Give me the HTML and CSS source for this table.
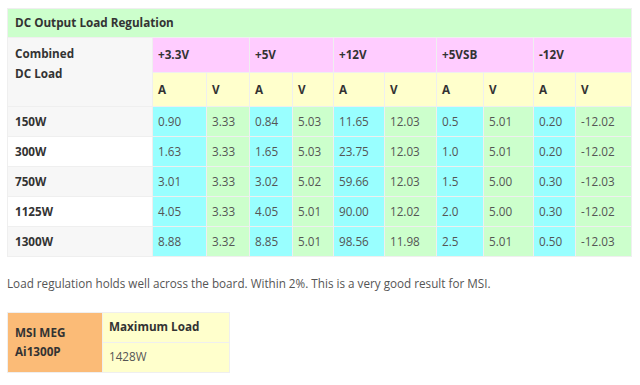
FILE: index.html
```html
<!DOCTYPE html>
<html>
<head>
<meta charset="utf-8">
<link rel="stylesheet" href="styles.css">
</head>
<body>
<div class="page">
<table class="reg">
  <colgroup>
    <col class="c0"><col class="c1"><col class="c2"><col class="c3"><col class="c4"><col class="c5"><col class="c6"><col class="c7"><col class="c8"><col class="c9"><col class="c10">
  </colgroup>
  <tr class="title"><th colspan="11" class="green">DC Output Load Regulation</th></tr>
  <tr class="h1">
    <th rowspan="2" class="gray top">Combined<br>DC Load</th>
    <th colspan="2" class="pink">+3.3V</th>
    <th colspan="2" class="pink">+5V</th>
    <th colspan="2" class="pink">+12V</th>
    <th colspan="2" class="pink">+5VSB</th>
    <th colspan="2" class="pink">-12V</th>
  </tr>
  <tr class="h2">
    <th class="yellow">A</th><th class="yellow">V</th>
    <th class="yellow">A</th><th class="yellow">V</th>
    <th class="yellow">A</th><th class="yellow">V</th>
    <th class="yellow">A</th><th class="yellow">V</th>
    <th class="yellow">A</th><th class="yellow">V</th>
  </tr>
  <tr class="row">
    <th class="gray">150W</th>
    <td class="cyan">0.90</td><td class="green">3.33</td><td class="cyan">0.84</td><td class="green">5.03</td><td class="cyan">11.65</td><td class="green">12.03</td><td class="cyan">0.5</td><td class="green">5.01</td><td class="cyan">0.20</td><td class="green">-12.02</td>
  </tr>
  <tr class="row">
    <th class="white">300W</th>
    <td class="cyan">1.63</td><td class="green">3.33</td><td class="cyan">1.65</td><td class="green">5.03</td><td class="cyan">23.75</td><td class="green">12.03</td><td class="cyan">1.0</td><td class="green">5.01</td><td class="cyan">0.20</td><td class="green">-12.02</td>
  </tr>
  <tr class="row">
    <th class="gray">750W</th>
    <td class="cyan">3.01</td><td class="green">3.33</td><td class="cyan">3.02</td><td class="green">5.02</td><td class="cyan">59.66</td><td class="green">12.03</td><td class="cyan">1.5</td><td class="green">5.00</td><td class="cyan">0.30</td><td class="green">-12.03</td>
  </tr>
  <tr class="row">
    <th class="white">1125W</th>
    <td class="cyan">4.05</td><td class="green">3.33</td><td class="cyan">4.05</td><td class="green">5.01</td><td class="cyan">90.00</td><td class="green">12.02</td><td class="cyan">2.0</td><td class="green">5.00</td><td class="cyan">0.30</td><td class="green">-12.02</td>
  </tr>
  <tr class="row">
    <th class="gray">1300W</th>
    <td class="cyan">8.88</td><td class="green">3.32</td><td class="cyan">8.85</td><td class="green">5.01</td><td class="cyan">98.56</td><td class="green">11.98</td><td class="cyan">2.5</td><td class="green">5.01</td><td class="cyan">0.50</td><td class="green">-12.03</td>
  </tr>
</table>

<p class="note">Load regulation holds well across the board. Within 2%. This is a very good result for MSI.</p>

<table class="maxload">
  <colgroup><col class="m0"><col class="m1"></colgroup>
  <tr class="mrow">
    <th rowspan="2" class="orange">MSI MEG<br>Ai1300P</th>
    <th class="yellow">Maximum Load</th>
  </tr>
  <tr class="mrow">
    <td class="yellow">1428W</td>
  </tr>
</table>
</div>
</body>
</html>
```

FILE: styles.css
```css
html, body {
  margin: 0;
  padding: 0;
  background: #ffffff;
}
.page {
  padding: 8px 7px;
  font-family: "Open Sans", "DejaVu Sans", sans-serif;
  font-size: 11.7px;
  line-height: 19.5px;
  color: #555555;
}
table {
  border-collapse: collapse;
  table-layout: fixed;
}
.reg {
  width: 624px;
}
th, td {
  border: 1px solid #efefef;
  text-align: left;
  vertical-align: middle;
  padding: 0 5px;
}
th {
  font-weight: 700;
  color: #333333;
}
td {
  font-weight: 400;
  color: #555555;
}
.c0 { width: 145px; }
.c1 { width: 54px; }
.c2 { width: 43px; }
.c3 { width: 43px; }
.c4 { width: 41px; }
.c5 { width: 51px; }
.c6 { width: 52px; }
.c7 { width: 47px; }
.c8 { width: 50px; }
.c9 { width: 42px; }
.c10 { width: 56px; }
.title { height: 29px; }
.title th { padding-left: 7px; }
.h1 { height: 35px; }
.h2 { height: 34px; }
.row { height: 30px; }
.row th, .gray.top { padding-left: 7px; }
.top { vertical-align: top; padding-top: 6px; }
.green { background: #ccffcc; }
.pink { background: #ffccff; }
.yellow { background: #ffffcc; }
.cyan { background: #99ffff; }
.gray { background: #f7f7f7; }
.white { background: #ffffff; }
.orange { background: #fbbb77; }
.note {
  margin: 17px 0 18px 0;
}
.maxload {
  width: 222px;
}
.m0 { width: 95px; }
.m1 { width: 127px; }
.mrow { height: 30px; }
.maxload th, .maxload td { padding-left: 7px; }
.maxload .yellow { padding-left: 6px; }
```
